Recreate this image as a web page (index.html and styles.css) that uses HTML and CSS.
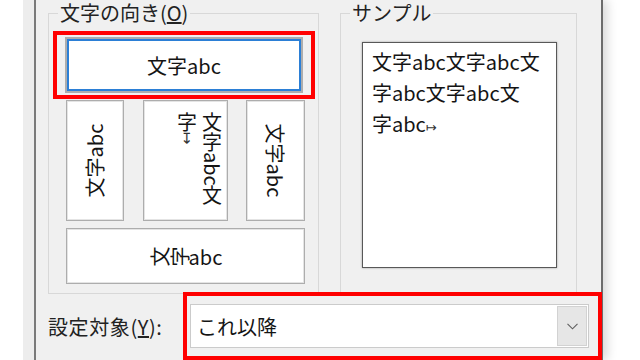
FILE: index.html
```html
<!DOCTYPE html>
<html lang="ja">
<head>
<meta charset="utf-8">
<title>文字列の方向</title>
<link rel="stylesheet" href="styles.css">
</head>
<body>
<div class="screen">
  <div class="dialog">
    <div class="groups">
      <fieldset class="group group-orient">
        <legend>文字の向き(<u>O</u>)</legend>
        <div class="orient">
          <div class="hl hl-top">
            <div class="opt opt-selected">文字abc</div>
          </div>
          <div class="opt-row">
            <div class="opt opt-v opt-v1"><span class="rot-ccw">文字abc</span></div>
            <div class="opt opt-v opt-v2"><span class="tate">文字abc文<br>字<span class="mark mark-v">↦</span></span></div>
            <div class="opt opt-v opt-v3"><span class="rot-cw">文字abc</span></div>
          </div>
          <div class="opt opt-h"><span class="r">文</span><span class="r">字</span>abc</div>
        </div>
      </fieldset>
      <fieldset class="group group-sample">
        <legend>サンプル</legend>
        <div class="sample">
          <div>文字abc文字abc文</div>
          <div>字abc文字abc文</div>
          <div>字abc<span class="mark">↦</span></div>
        </div>
      </fieldset>
    </div>
    <div class="apply-row">
      <label class="apply-label">設定対象(<u>Y</u>):</label>
      <div class="hl hl-bottom">
        <div class="combo">
          <span class="combo-value">これ以降</span>
          <span class="combo-btn">
            <svg width="11" height="7" viewBox="0 0 11 7"><polyline points="0.5,0.8 5.5,5.8 10.5,0.8" fill="none" stroke="#5e5e5e" stroke-width="1.1"/></svg>
          </span>
        </div>
      </div>
    </div>
  </div>
</div>
</body>
</html>
```
FILE: styles.css
```css
html, body {
  margin: 0;
  width: 640px;
  height: 360px;
  overflow: hidden;
  background: #ffffff;
}
body {
  font-family: "Noto Sans CJK JP", "Noto Sans", sans-serif;
  font-size: 20px;
  color: #141414;
}
.screen {
  display: flex;
  height: 360px;
  padding-left: 34px;
}
.dialog {
  width: 569px;
  height: 360px;
  box-sizing: border-box;
  border-left: 2px solid #7a7a7a;
  border-right: 2px solid #6c6c6c;
  background: #f0f0f0;
  padding-left: 12px;
  box-shadow: -11px 0 0 #ededed, 4px 0 10px rgba(0, 0, 0, 0.16);
}
.groups {
  display: flex;
  gap: 21px;
  height: 294px;
}
.group {
  margin: 0;
  padding: 0;
  min-width: 0;
  box-sizing: border-box;
  height: 294px;
  border: 1px solid #d8d8d8;
}
.group-orient { width: 271px; }
.group-sample { width: 237px; }
.group legend {
  padding: 0 2px;
  margin-left: 9px;
  line-height: 26px;
  color: #222;
}
.orient {
  display: flex;
  flex-direction: column;
  padding: 0 13px 0 17px;
}
.hl {
  border: 4px solid #ff0000;
  box-sizing: border-box;
}
.hl-top {
  margin: 5px -10px 0 -13px;
  padding: 2px 8px;
}
.opt {
  background: #ffffff;
  box-sizing: border-box;
  display: flex;
  align-items: center;
  justify-content: center;
  border: 1px solid #adadad;
  box-shadow: inset 0 0 0 1px #e4e4e4;
  white-space: nowrap;
}
.opt-selected {
  height: 56px;
  border: 2px solid #adadad;
  box-shadow: inset 0 0 0 2px #2b7fd6;
}
.opt-row {
  display: flex;
  justify-content: space-between;
  margin-top: 1px;
  height: 121px;
}
.opt-v1 { width: 58px; }
.opt-v2 {
  width: 85px;
  align-items: flex-start;
  justify-content: flex-end;
  padding: 11px 2px 0 0;
}
.opt-v3 { width: 59px; }
.tate {
  writing-mode: vertical-rl;
  text-orientation: mixed;
  line-height: 25px;
}
.mark {
  font-family: "DejaVu Sans", sans-serif;
  font-size: 13px;
  color: #333;
}
.mark-v {
  font-size: 15px;
}
.rot-ccw {
  display: inline-block;
  transform: rotate(-90deg);
}
.rot-cw {
  display: inline-block;
  transform: rotate(90deg);
}
.opt-h {
  height: 56px;
  margin-top: 7px;
}
.r {
  display: inline-block;
  transform: rotate(-90deg);
}
.sample {
  margin: 16px 0 0 21px;
  width: 195px;
  height: 226px;
  box-sizing: border-box;
  border: 1px solid #585858;
  background: #ffffff;
  padding: 3px 0 0 9px;
  line-height: 31px;
  box-shadow: 0 0 2px rgba(0, 0, 0, 0.35);
  white-space: nowrap;
}
.apply-row {
  display: flex;
  align-items: center;
  margin-top: -2px;
  height: 68px;
}
.apply-label {
  flex: 1;
  color: #222;
  letter-spacing: 0.6px;
}
.hl-bottom {
  width: 419px;
  height: 68px;
  margin-right: -1px;
  padding: 8px 9px 8px 3px;
}
.combo {
  height: 44px;
  box-sizing: border-box;
  border: 1px solid #cbcbcb;
  background: #ffffff;
  display: flex;
}
.combo-value {
  flex: 1;
  display: flex;
  align-items: center;
  padding-left: 6px;
}
.combo-btn {
  width: 30px;
  margin: 1px 1px 1px 0;
  box-sizing: border-box;
  background: #e6e6e6;
  border: 1px solid #d2d2d2;
  display: flex;
  align-items: center;
  justify-content: center;
}
```
